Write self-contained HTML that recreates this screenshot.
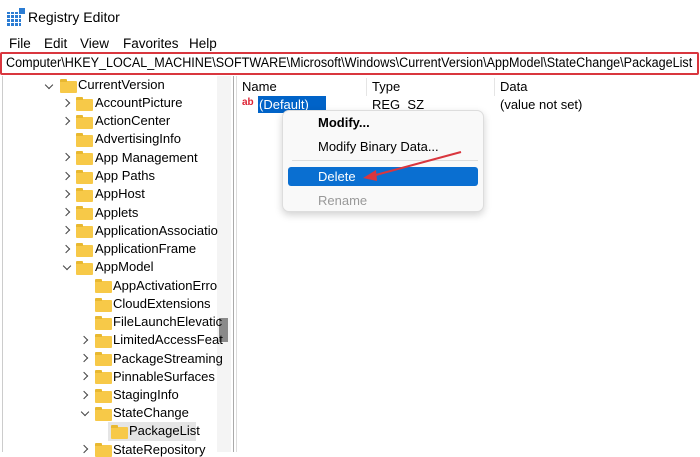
<!DOCTYPE html>
<html><head><style>
*{margin:0;padding:0;box-sizing:border-box}
body{width:700px;height:452px;overflow:hidden;background:#fff;font-family:"Liberation Sans",sans-serif;font-size:13px;color:#000;position:relative}
.a{position:absolute;white-space:nowrap}
.f{position:absolute;width:17px;height:12px;background:#f7c948;border-radius:1px}
.f:before{content:"";position:absolute;left:0;top:-2px;width:7px;height:3px;background:#e8b830;border-radius:1px 1px 0 0}
.ch{position:absolute;width:6px;height:6px;border-right:1.5px solid #444;border-bottom:1.5px solid #444}
.r{transform:rotate(-45deg)}
.d{transform:rotate(45deg)}
</style></head><body>
<!-- title -->
<div class="a" style="left:7px;top:8px;width:18px;height:18px">
<div style="position:absolute;left:0;top:4px;width:14px;height:14px;background:repeating-linear-gradient(90deg,#2b7cd3 0 3px,#fff 3px 4px)"></div>
<div style="position:absolute;left:0;top:4px;width:14px;height:14px;background:repeating-linear-gradient(0deg,transparent 0 3px,#fff 3px 4px)"></div>
<div style="position:absolute;left:12px;top:0;width:6px;height:6px;background:#2b7cd3"></div></div>
<div class="a" style="left:28px;top:9px;font-size:14px">Registry Editor</div>
<div class="a" style="left:9px;top:36px;font-size:13.5px">File</div>
<div class="a" style="left:44px;top:36px;font-size:13.5px">Edit</div>
<div class="a" style="left:80px;top:36px;font-size:13.5px">View</div>
<div class="a" style="left:123px;top:36px;font-size:13.5px">Favorites</div>
<div class="a" style="left:189px;top:36px;font-size:13.5px">Help</div>
<div class="a" style="left:0;top:52px;width:699px;height:23px;border:2px solid #d9363e;border-radius:2px"></div>
<div class="a" style="left:6px;top:55px;font-size:13.5px;transform:scaleX(0.932);transform-origin:left top">Computer\HKEY_LOCAL_MACHINE\SOFTWARE\Microsoft\Windows\CurrentVersion\AppModel\StateChange\PackageList</div>
<!-- panes -->
<div class="a" style="left:2px;top:76px;width:1px;height:376px;background:#ccc"></div>
<div class="a" style="left:233px;top:76px;width:1px;height:376px;background:#aaa"></div>
<div class="a" style="left:236px;top:76px;width:1px;height:376px;background:#ddd"></div>
<div class="a" style="left:217px;top:76px;width:14px;height:376px;background:#f4f4f4"></div>
<div class="a" style="left:219px;top:318px;width:9px;height:24px;background:#8a8a8a"></div>
<div class="a" style="left:366px;top:78px;width:1px;height:18px;background:#e5e5e5"></div>
<div class="a" style="left:494px;top:78px;width:1px;height:18px;background:#e5e5e5"></div>
<div class="a" style="left:242px;top:79px">Name</div>
<div class="a" style="left:372px;top:79px">Type</div>
<div class="a" style="left:500px;top:79px">Data</div>
<div class="a" style="left:242px;top:97px;font-size:10px;color:#d23;font-weight:bold">ab</div>
<div class="a" style="left:258px;top:96px;width:68px;height:17px;background:#0063c8"></div>
<div class="a" style="left:259px;top:97px;color:#fff">(Default)</div>
<div class="a" style="left:372px;top:97px">REG_SZ</div>
<div class="a" style="left:500px;top:97px">(value not set)</div>
<!-- menu -->
<div class="a" style="left:282px;top:110px;width:202px;height:102px;background:#f9f9f9;border:1px solid #ddd;border-radius:7px;box-shadow:0 3px 8px rgba(0,0,0,.18)"></div>
<div class="a" style="left:318px;top:115px;font-weight:bold">Modify...</div>
<div class="a" style="left:318px;top:139px">Modify Binary Data...</div>
<div class="a" style="left:292px;top:160px;width:186px;height:1px;background:#ddd"></div>
<div class="a" style="left:288px;top:167px;width:190px;height:19px;background:#0a6fd1;border-radius:3px"></div>
<div class="a" style="left:318px;top:169px;color:#fff">Delete</div>
<div class="a" style="left:318px;top:193px;color:#999">Rename</div>
<svg class="a" style="left:0;top:0" width="700" height="452"><line x1="461" y1="152" x2="372" y2="176" stroke="#d9363e" stroke-width="2"/><polygon points="363,178 376,170 377,181" fill="#d9363e"/></svg>
<!-- tree -->
<div style="position:absolute;left:0;top:1px">
<div class="ch d" style="left:46px;top:81px"></div><div class="f" style="left:60px;top:80px"></div><div class="a" style="left:78px;top:76px">CurrentVersion</div>
<div class="ch r" style="left:63px;top:99px"></div><div class="f" style="left:76px;top:98px"></div><div class="a" style="left:95px;top:94px">AccountPicture</div>
<div class="ch r" style="left:63px;top:117px"></div><div class="f" style="left:76px;top:116px"></div><div class="a" style="left:95px;top:112px">ActionCenter</div>
<div class="f" style="left:76px;top:134px"></div><div class="a" style="left:95px;top:130px">AdvertisingInfo</div>
<div class="ch r" style="left:63px;top:153px"></div><div class="f" style="left:76px;top:152px"></div><div class="a" style="left:95px;top:149px">App Management</div>
<div class="ch r" style="left:63px;top:172px"></div><div class="f" style="left:76px;top:171px"></div><div class="a" style="left:95px;top:167px">App Paths</div>
<div class="ch r" style="left:63px;top:190px"></div><div class="f" style="left:76px;top:189px"></div><div class="a" style="left:95px;top:185px">AppHost</div>
<div class="ch r" style="left:63px;top:208px"></div><div class="f" style="left:76px;top:207px"></div><div class="a" style="left:95px;top:204px">Applets</div>
<div class="ch r" style="left:63px;top:226px"></div><div class="f" style="left:76px;top:225px"></div><div class="a" style="left:95px;top:222px">ApplicationAssociatio</div>
<div class="ch r" style="left:63px;top:245px"></div><div class="f" style="left:76px;top:244px"></div><div class="a" style="left:95px;top:240px">ApplicationFrame</div>
<div class="ch d" style="left:64px;top:262px"></div><div class="f" style="left:76px;top:262px"></div><div class="a" style="left:95px;top:258px">AppModel</div>
<div class="f" style="left:95px;top:280px"></div><div class="a" style="left:113px;top:277px">AppActivationErro</div>
<div class="f" style="left:95px;top:299px"></div><div class="a" style="left:113px;top:295px">CloudExtensions</div>
<div class="f" style="left:95px;top:317px"></div><div class="a" style="left:113px;top:313px">FileLaunchElevatic</div>
<div class="ch r" style="left:81px;top:336px"></div><div class="f" style="left:95px;top:335px"></div><div class="a" style="left:113px;top:331px">LimitedAccessFeat</div>
<div class="ch r" style="left:81px;top:354px"></div><div class="f" style="left:95px;top:353px"></div><div class="a" style="left:113px;top:350px">PackageStreaming</div>
<div class="ch r" style="left:81px;top:372px"></div><div class="f" style="left:95px;top:371px"></div><div class="a" style="left:113px;top:368px">PinnableSurfaces</div>
<div class="ch r" style="left:81px;top:391px"></div><div class="f" style="left:95px;top:390px"></div><div class="a" style="left:113px;top:386px">StagingInfo</div>
<div class="ch d" style="left:82px;top:408px"></div><div class="f" style="left:95px;top:408px"></div><div class="a" style="left:113px;top:404px">StateChange</div>
<div class="a" style="left:108px;top:421px;width:88px;height:19px;background:#e5e5e5"></div>
<div class="f" style="left:111px;top:426px"></div><div class="a" style="left:129px;top:422px">PackageList</div>
<div class="ch r" style="left:81px;top:445px"></div><div class="f" style="left:95px;top:444px"></div><div class="a" style="left:113px;top:441px">StateRepository</div>
</div>
</body></html>
